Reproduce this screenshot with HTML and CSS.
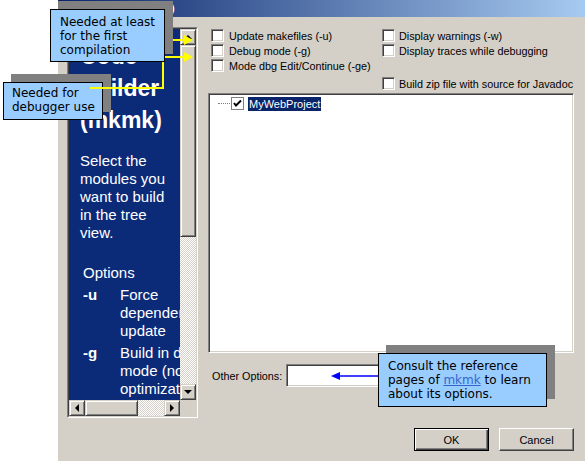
FILE: index.html
```html
<!DOCTYPE html>
<html>
<head>
<meta charset="utf-8">
<title>Code Builder (mkmk)</title>
<link rel="stylesheet" href="styles.css">
</head>
<body>
<div class="dialog">
  <div class="titlebar">Code Builder (mkmk)</div>
  <div class="main">
    <div class="helpframe">
      <div class="helpinner">
        <div class="helpview">
          <div class="helpcontent">
            <h1 class="help-title">Code Builder (mkmk)</h1>
            <p class="help-text">Select the modules you want to build in the tree view.</p>
            <div class="opt-title">Options</div>
            <div class="opt-row"><b class="opt-key">-u</b><span class="opt-desc">Force dependency update</span></div>
            <div class="opt-row"><b class="opt-key">-g</b><span class="opt-desc">Build in debug mode (no optimization)</span></div>
          </div>
        </div>
        <div class="vscroll">
          <div class="sbtn arrow-up"></div>
          <div class="vthumb"></div>
          <div class="vtrack"></div>
          <div class="sbtn arrow-down"></div>
        </div>
        <div class="hscroll">
          <div class="sbtn arrow-left"></div>
          <div class="hthumb"></div>
          <div class="htrack"></div>
          <div class="sbtn arrow-right"></div>
        </div>
        <div class="corner"></div>
      </div>
    </div>

    <div class="settings">
      <div class="checks">
        <div class="col col1">
          <label class="check"><span class="box"></span>Update makefiles (-u)</label>
          <label class="check"><span class="box"></span>Debug mode (-g)</label>
          <label class="check"><span class="box"></span>Mode dbg Edit/Continue (-ge)</label>
        </div>
        <div class="col col2">
          <label class="check"><span class="box"></span>Display warnings (-w)</label>
          <label class="check"><span class="box"></span>Display traces while debugging</label>
          <label class="check zip"><span class="box"></span>Build zip file with source for Javadoc</label>
        </div>
      </div>
      <div class="tree">
        <div class="tree-row">
          <span class="tree-dots"></span>
          <span class="tree-check"><svg width="11" height="11" viewBox="0 0 11 11"><path d="M2 5 L4 7.5 L9 2.5" fill="none" stroke="#000" stroke-width="2"/></svg></span>
          <span class="tree-label">MyWebProject</span>
        </div>
      </div>
      <div class="other">
        <span class="other-label">Other Options:</span>
        <span class="other-input"></span>
      </div>
      <div class="buttons">
        <button class="btn btn-default">OK</button>
        <button class="btn">Cancel</button>
      </div>
    </div>
  </div>
</div>

<div class="callout c2">Needed for<br>debugger use</div>

<svg class="arrows" width="585" height="461" viewBox="0 0 585 461">
  <polyline points="90,88 163,88 163,57 185,57" fill="none" stroke="#ffff00" stroke-width="2"/>
  <polygon points="184,52 193,57 184,62" fill="#ffff00"/>
  <line x1="160" y1="40" x2="185" y2="40" stroke="#ffff00" stroke-width="2"/>
  <polygon points="184,35 193,40 184,45" fill="#ffff00"/>
  <line x1="378" y1="376" x2="338" y2="376" stroke="#0000ff" stroke-width="1.5"/>
  <polygon points="331,376 340,372 340,380" fill="#0000ff"/>
</svg>

<div class="callout c1">Needed at least<br>for the first<br>compilation</div>
<div class="callout c3">Consult the reference<br>pages of <a class="link" href="#">mkmk</a> to learn<br>about its options.</div>
</body>
</html>
```
FILE: styles.css
```css
* { box-sizing: border-box; }

body {
  margin: 0;
  width: 585px;
  height: 461px;
  overflow: hidden;
  position: relative;
  background: #ffffff;
  font-family: "Liberation Sans", Arial, sans-serif;
}

.dialog {
  margin-left: 58px;
  width: 527px;
  height: 461px;
  background: #d4d0c8;
}

.titlebar {
  height: 17px;
  padding-left: 6px;
  background: linear-gradient(to right, #0a246a, #a6caf0);
  color: #fff;
  font-weight: bold;
  font-size: 11px;
  line-height: 17px;
  white-space: nowrap;
}

.main {
  display: flex;
  align-items: flex-start;
}

/* ---------- left help panel ---------- */
.helpframe {
  margin: 10px 0 0 9px;
  width: 131px;
  height: 391px;
  border: 1px solid;
  border-color: #808080 #ffffff #ffffff #808080;
}

.helpinner {
  width: 129px;
  height: 389px;
  border: 1px solid;
  border-color: #404040 #d4d0c8 #d4d0c8 #404040;
  display: grid;
  grid-template-columns: 111px 16px;
  grid-template-rows: 371px 16px;
}

.helpview {
  background: #0b2a78;
  overflow: hidden;
  color: #fff;
}

.helpcontent {
  width: 220px;
  padding-left: 11px;
}

.help-title {
  margin: 11px 0 0;
  width: 96px;
  font-size: 23px;
  line-height: 32px;
  font-weight: bold;
}

.help-text {
  margin: 16px 0 0;
  width: 96px;
  font-size: 15px;
  line-height: 18px;
}

.opt-title {
  margin-top: 22px;
  padding-left: 3px;
  font-size: 15px;
  line-height: 18px;
}

.opt-row {
  display: grid;
  grid-template-columns: 37px 110px;
  padding-left: 3px;
  margin-top: 4px;
  font-size: 15px;
  line-height: 18px;
}

.opt-key { font-weight: bold; }

/* scrollbars */
.vscroll {
  display: flex;
  flex-direction: column;
}

.hscroll {
  display: flex;
}

.corner { background: #d4d0c8; }

.sbtn, .vthumb, .hthumb {
  width: 16px;
  height: 16px;
  flex: none;
  background: #d4d0c8;
  border: 1px solid;
  border-color: #d4d0c8 #404040 #404040 #d4d0c8;
  box-shadow: inset 1px 1px #ffffff, inset -1px -1px #808080;
  position: relative;
}

.vthumb { height: 192px; }
.hthumb { width: 53px; }

.vtrack, .htrack {
  flex: 1;
  background-color: #d4d0c8;
  background-image: repeating-conic-gradient(#ffffff 0 25%, #d4d0c8 0 50%);
  background-size: 2px 2px;
}

.sbtn::after {
  content: "";
  position: absolute;
  width: 0;
  height: 0;
  border: 4px solid transparent;
}

.arrow-up::after {
  left: 3px; top: 1px;
  border-bottom-color: #000;
}
.arrow-down::after {
  left: 3px; top: 5px;
  border-top-color: #000;
}
.arrow-left::after {
  left: 1px; top: 3px;
  border-right-color: #000;
}
.arrow-right::after {
  left: 5px; top: 3px;
  border-left-color: #000;
}

/* ---------- right settings ---------- */
.settings {
  margin-left: 10px;
  width: 366px;
  padding-top: 11px;
  display: flex;
  flex-direction: column;
  font-size: 10.8px;
  color: #000;
}

.checks {
  display: flex;
  height: 65px;
}

.col1 {
  width: 174px;
  padding-left: 3px;
}

.check {
  display: flex;
  align-items: center;
  gap: 5px;
  height: 15px;
  white-space: nowrap;
}

.col2 .check { gap: 4px; }

.zip { margin-top: 18px; }

.box {
  width: 13px;
  height: 13px;
  flex: none;
  background: #fff;
  border: 1px solid;
  border-color: #808080 #ffffff #ffffff #808080;
  box-shadow: inset 1px 1px #404040, inset -1px -1px #d4d0c8;
}

.tree {
  height: 260px;
  background: #fff;
  border: 1px solid;
  border-color: #808080 #ffffff #ffffff #808080;
  box-shadow: inset 1px 1px #404040, inset -1px -1px #d4d0c8;
  padding: 2px 0 0 9px;
}

.tree-row {
  display: flex;
  align-items: center;
  height: 15px;
}

.tree-dots {
  width: 12px;
  border-top: 1px dotted #808080;
}

.tree-check {
  margin-left: 1px;
  width: 13px;
  height: 13px;
  border: 1px solid #808080;
  background: #fff;
  display: flex;
  align-items: center;
  justify-content: center;
}

.tree-label {
  margin-left: 4px;
  padding: 0 1px;
  background: #0a246a;
  color: #fff;
  line-height: 14px;
  font-size: 11px;
}

.other {
  margin-top: 11px;
  height: 23px;
  display: flex;
  align-items: center;
}

.other-label {
  width: 78px;
  padding-left: 4px;
  white-space: nowrap;
}

.other-input {
  width: 254px;
  height: 23px;
  background: #fff;
  border: 1px solid;
  border-color: #808080 #ffffff #ffffff #808080;
  box-shadow: inset 1px 1px #404040, inset -1px -1px #d4d0c8;
}

.buttons {
  margin-top: 41px;
  display: flex;
  justify-content: flex-end;
  gap: 10px;
}

.btn {
  width: 75px;
  height: 23px;
  padding: 0;
  background: #d4d0c8;
  font-family: "Liberation Sans", Arial, sans-serif;
  font-size: 11px;
  color: #000;
  border: 1px solid;
  border-color: #ffffff #404040 #404040 #ffffff;
  box-shadow: inset -1px -1px #808080;
}

.btn-default {
  border-color: #000;
  box-shadow: inset 1px 1px #ffffff, inset -1px -1px #404040, inset -2px -2px #808080;
}

/* ---------- callouts ---------- */
.callout {
  position: absolute;
  background: #99ccff;
  border: 1px solid #000;
  box-shadow: 8px -8px 0 #808080;
  font-family: "DejaVu Sans", Verdana, sans-serif;
  font-size: 12px;
  line-height: 14px;
  color: #000;
  white-space: nowrap;
}

.c1 {
  left: 50px;
  top: 9px;
  width: 115px;
  height: 53px;
  padding: 5px 0 0 9px;
  z-index: 3;
}

.c2 {
  left: 3px;
  top: 82px;
  width: 100px;
  height: 38px;
  padding: 3px 0 0 8px;
  z-index: 1;
}

.c3 {
  left: 378px;
  top: 353px;
  width: 169px;
  height: 54px;
  padding: 5px 0 0 9px;
  z-index: 3;
}

.link {
  color: #3366cc;
  text-decoration: underline;
}

.arrows {
  position: absolute;
  left: 0;
  top: 0;
  z-index: 2;
  pointer-events: none;
}
```
